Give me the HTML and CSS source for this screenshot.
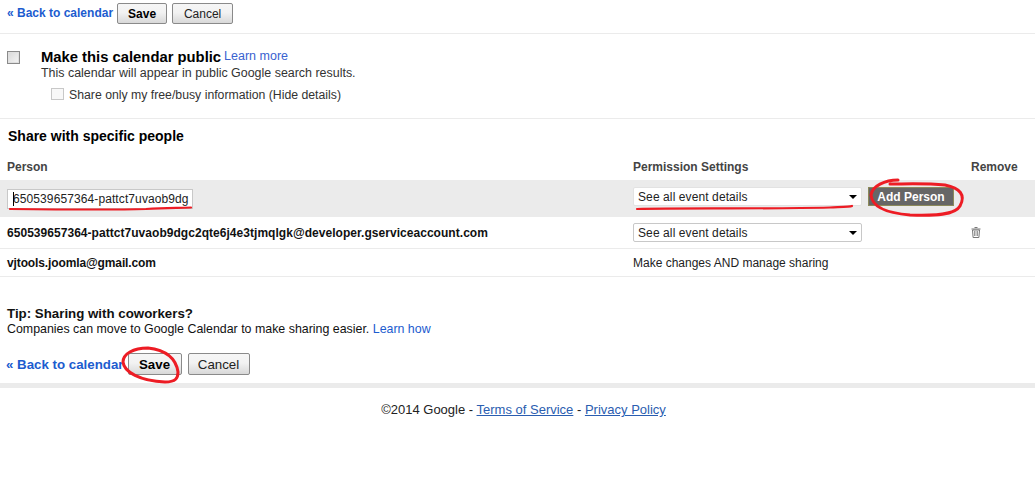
FILE: index.html
```html
<!DOCTYPE html>
<html lang="en">
<head>
<meta charset="utf-8">
<title>Calendar sharing</title>
<link rel="stylesheet" href="styles.css">
</head>
<body>
<div class="topbar">
  <a class="back" href="#">« Back to calendar</a>
  <button class="btn btn-save">Save</button>
  <button class="btn btn-cancel">Cancel</button>
</div>
<section class="public">
  <input class="check-main" type="checkbox">
  <div class="public-text">
    <div class="public-title"><b>Make this calendar public</b> <a href="#">Learn more</a></div>
    <div class="public-desc">This calendar will appear in public Google search results.</div>
    <div class="public-sub"><span class="check-sub"></span><span>Share only my free/busy information (Hide details)</span></div>
  </div>
</section>
<section class="share">
  <h2>Share with specific people</h2>
  <div class="row row-head">
    <div class="c-person">Person</div>
    <div class="c-perm">Permission Settings</div>
    <div class="c-remove">Remove</div>
  </div>
  <div class="row row-add">
    <div class="c-person"><div class="person-input"><span class="caret"></span>650539657364-pattct7uvaob9dg</div></div>
    <div class="c-perm add-perm">
      <div class="select"><span>See all event details</span><i class="arrow"></i></div>
      <button class="add-btn">Add Person</button>
    </div>
  </div>
  <div class="row row-a">
    <div class="c-person name name-long">650539657364-pattct7uvaob9dgc2qte6j4e3tjmqlgk@developer.gserviceaccount.com</div>
    <div class="c-perm"><div class="select"><span>See all event details</span><i class="arrow"></i></div></div>
    <div class="c-remove trash">
      <svg width="10" height="11" viewBox="0 0 10 11"><path d="M3.500 .5h3M.5 2h9" stroke="#777" fill="none"/><path d="M1.500 3h7l-.6 7.500H2.100z" fill="#fff" stroke="#777"/><path d="M3.500 4v5M5 4v5M6.500 4v5" stroke="#999"/></svg>
    </div>
  </div>
  <div class="row row-b">
    <div class="c-person name name-short">vjtools.joomla@gmail.com</div>
    <div class="c-perm">Make changes AND manage sharing</div>
  </div>
</section>
<section class="tip">
  <div class="tip-title">Tip: Sharing with coworkers?</div>
  <div class="tip-body">Companies can move to Google Calendar to make sharing easier. <a href="#">Learn how</a></div>
</section>
<div class="bottombar">
  <a class="back back-big" href="#">« Back to calendar</a>
  <button class="btn btn-save btn-big">Save</button>
  <button class="btn btn-cancel btn-big">Cancel</button>
</div>
<footer>©2014 Google - <a href="#">Terms of Service</a> - <a href="#">Privacy Policy</a></footer>
<svg class="marks" width="1035" height="478" viewBox="0 0 1035 478" fill="none" stroke="#ed1c24" stroke-linecap="round" stroke-linejoin="round">
  <path d="M10 209C60 209.500 110 210 146 209C165 208 178 208 191 207.500" stroke-width="2.200"/>
  <path d="M637 209C680 208 760 209 830 207.500C842 207 850 207 852 206" stroke-width="2.200"/>
  <path d="M898 180C885 180 872 186 871 195C872 207 885 213 910 215C935 216 955 215 960 206C966 195 960 188 945 185C925 183 905 184 890 184" stroke-width="3"/>
  <path d="M178 372C176 358 165 350 148 348C133 348 123 354 123 362C124 372 140 381 165 382C176 382 178 378 178 372" stroke-width="3"/>
</svg>
</body>
</html>
```
FILE: styles.css
```css
* { box-sizing: border-box; }
html, body { margin: 0; padding: 0; }
body {
  width: 1035px;
  height: 478px;
  overflow: hidden;
  position: relative;
  background: #fff;
  color: #000;
  font-family: "Liberation Sans", Arial, sans-serif;
  font-size: 12px;
}
a { color: #1c5ccf; text-decoration: none; }
.topbar {
  height: 34px;
  display: flex;
  align-items: flex-start;
  padding: 3px 0 0 7px;
  border-bottom: 1px solid #ebebeb;
}
.back { font-weight: bold; font-size: 12px; line-height: 20px; margin-right: 4px; }
.btn {
  height: 21px;
  padding: 0;
  border: 1px solid #8a8a8a;
  border-radius: 2px;
  background: linear-gradient(#f6f6f6, #f2f2f2 45%, #d8d8d8);
  font-family: inherit;
  font-size: 12px;
  color: #222;
}
.btn-save { width: 50px; font-weight: bold; color: #000; }
.btn-cancel { width: 61px; margin-left: 5px; }
.public {
  height: 85px;
  display: flex;
  border-bottom: 1px solid #ebebeb;
  padding: 17px 0 0 7px;
}
.check-main {
  appearance: none;
  width: 13px;
  height: 13px;
  margin: 0;
  border: 1px solid #8a8a8a;
  background: linear-gradient(135deg, #d8d8d8, #f4f4f4);
  box-shadow: inset 0 0 0 1px #dfdfdf;
}
.public-text { margin-left: 21px; color: #333; }
.public-title { height: 15px; display: flex; gap: 3px; align-items: flex-start; }
.public-title b { font-size: 14.800px; color: #000; line-height: 16px; margin-top: -2px; }
.public-title a { font-size: 12.500px; color: #3a62d0; line-height: 14px; margin-top: -2px; }
.public-desc { margin-top: 0; line-height: 15px; font-size: 12.450px; }
.public-sub { display: flex; align-items: center; margin: 7px 0 0 10px; line-height: 15px; font-size: 12.270px; }
.check-sub { width: 13px; height: 12px; margin: -4px 5px 0 0; border: 1px solid #c8c8c8; background: #f8f8f8; }
.share h2 { margin: 0; padding: 9px 0 0 8px; height: 30px; font-size: 14px; line-height: 17px; }
.row { display: flex; align-items: center; font-size: 12px; }
.c-person { width: 633px; padding-left: 7px; flex: none; }
.c-perm { width: 338px; flex: none; }
.c-remove { flex: none; }
.row-head { height: 31px; padding-top: 4px; color: #444; font-weight: bold; }
.row-add { height: 37px; background: #ebebeb; }
.person-input {
  width: 186px;
  height: 20px;
  background: #fff;
  border: 1px solid #c8c8c8;
  padding-left: 5px;
  line-height: 18px;
  letter-spacing: .1px;
  color: #222;
  position: relative;
  white-space: nowrap;
  overflow: hidden;
}
.caret { position: absolute; left: 5px; top: 2px; width: 1px; height: 14px; background: #000; }
.add-perm { display: flex; align-items: flex-start; height: 100%; padding-top: 7px; }
.select {
  width: 229px;
  height: 19px;
  display: flex;
  align-items: center;
  justify-content: space-between;
  padding: 0 4px 0 4px;
  background: #fff;
  border: 1px solid #c8c8c8;
  border-radius: 2px;
  color: #222;
  letter-spacing: .1px;
}
.add-perm .select { border-color: #e2e2e2; }
.arrow { width: 0; height: 0; border: 4px solid transparent; border-top: 4px solid #000; border-bottom: 0; }
.add-btn {
  margin-left: 6px;
  width: 86px;
  height: 19px;
  padding: 0;
  border: 1px solid #8c8a5a;
  background: #666;
  color: #fff;
  font-family: inherit;
  font-size: 12px;
  font-weight: bold;
}
.row-a { height: 32px; border-bottom: 1px solid #ebebeb; }
.row-b { height: 28px; border-bottom: 1px solid #ebebeb; color: #222; }
.name { font-weight: bold; color: #111; }
.name-long { letter-spacing: .04px; }
.name-short { letter-spacing: -.12px; }
.trash { display: flex; }
.tip { margin-top: 29px; padding-left: 7px; line-height: 15px; color: #111; }
.tip-title { font-size: 13.300px; font-weight: bold; }
.tip-body { margin-top: 1px; font-size: 12.400px; }
.bottombar {
  height: 41px;
  margin-top: 10px;
  padding: 6px 0 0 6px;
  display: flex;
  align-items: flex-start;
  border-bottom: 5px solid #ebebeb;
}
.back-big { font-size: 13.300px; line-height: 22px; margin: 1px 4px 0 0; }
.btn-big { height: 22px; font-size: 13.300px; }
.bottombar .btn-save { width: 54px; }
.bottombar .btn-cancel { width: 62px; margin-left: 6px; }
footer { padding: 13px 0 0 12px; text-align: center; font-size: 13px; line-height: 17px; color: #222; }
footer a { text-decoration: underline; color: #2a5db0; }
.marks { position: absolute; left: 0; top: 0; pointer-events: none; }
```
